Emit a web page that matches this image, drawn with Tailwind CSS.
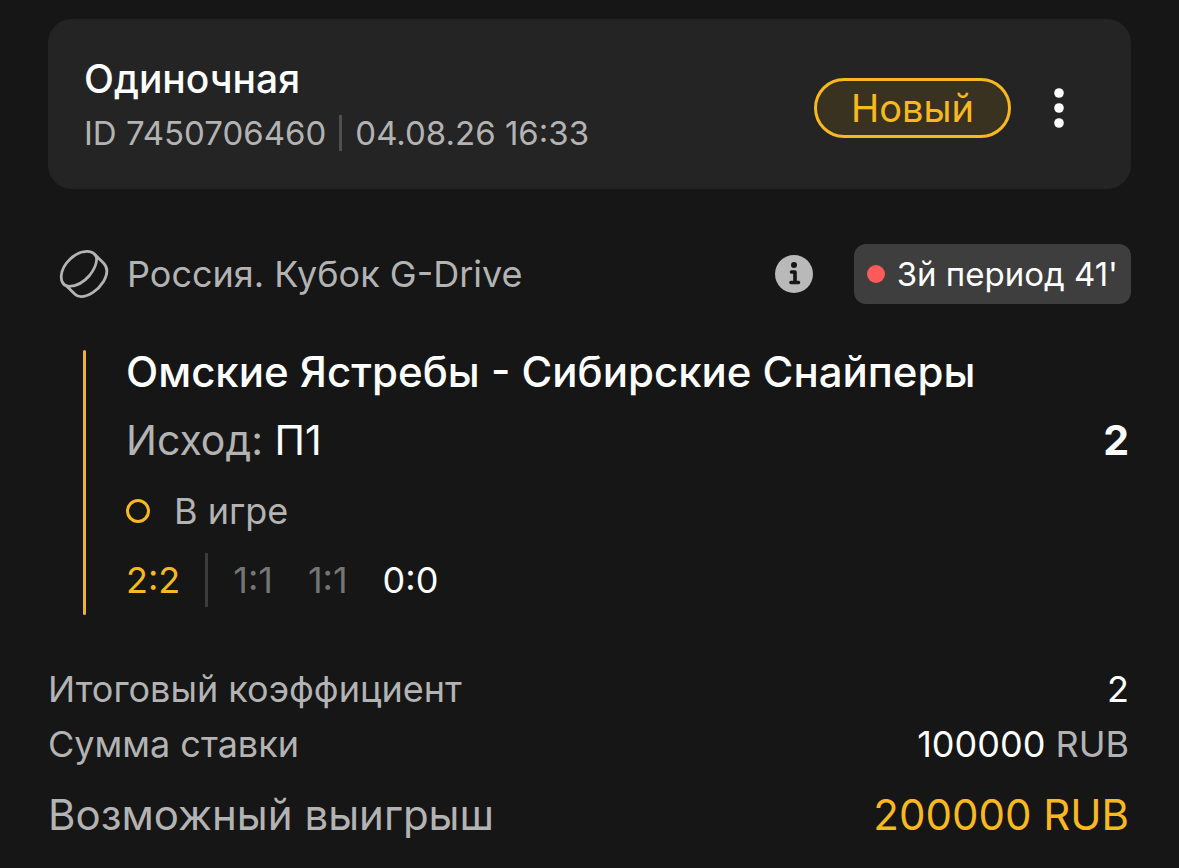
<!DOCTYPE html>
<html lang="ru">
<head>
<meta charset="utf-8">
<meta name="viewport" content="width=device-width, initial-scale=1">
<title>Одиночная ставка</title>
<script src="https://cdn.jsdelivr.net/npm/@tailwindcss/browser@4"></script>
</head>
<body class="bg-[#161616] font-['Inter',sans-serif] text-white">
<main class="flex min-h-screen flex-col px-12 pt-[19px] pb-6">
  <header class="flex items-center justify-between rounded-3xl bg-[#242424] pt-9 pr-[60px] pb-7 pl-9">
    <div class="pb-1">
      <h1 class="text-[39px] leading-[48px] font-medium">Одиночная</h1>
      <div class="mt-[6px] flex items-center gap-[13px] text-[33px] leading-[48px] text-[#b3b3b3]">
        <span>ID 7450706460</span>
        <span class="h-9 w-[3px] bg-[#4f4f4f]"></span>
        <time datetime="2026-08-04T16:33">04.08.26 16:33</time>
      </div>
    </div>
    <div class="flex items-center gap-9">
      <span class="flex h-[60px] items-center rounded-full border-3 border-[#f8b820] bg-[#3a3220] px-[34px] text-[38px] leading-[48px] text-[#f8b820]">Новый</span>
      <button type="button" aria-label="Меню" class="flex h-[60px] w-6 items-center justify-center">
        <svg class="h-10 w-3 fill-white" viewBox="0 0 12 40"><circle cx="6" cy="5" r="4.8"/><circle cx="6" cy="20" r="4.8"/><circle cx="6" cy="35" r="4.8"/></svg>
      </button>
    </div>
  </header>

  <section class="mt-[55px] flex items-center">
    <svg class="ml-2 h-14 w-14 fill-none stroke-[#b3b3b3]" viewBox="56 246 56 56" stroke-width="2.8" stroke-linejoin="round" stroke-linecap="round">
      <path d="M69 286.300C63.500 286.300 60.800 281.500 61.300 275.500C62.300 263.500 75.500 251.300 87 251.300C93 251.300 97 255 96.600 260C96.200 265 93.500 270.500 89.500 275.500C83.500 282.500 76 286.300 69 286.300Z"/>
      <path d="M94.800 254.500L103.700 263.200C107.800 267.500 107.500 274.500 103.500 281.500C98 290.500 88.500 296.600 81 296.600C78.500 296.600 76.500 295.700 75 294.200L66.300 285.800"/>
    </svg>
    <h2 class="ml-[15px] flex-1 text-[36px] leading-[48px] text-[#b3b3b3]">Россия. Кубок G-Drive</h2>
    <button type="button" aria-label="Информация" class="mr-[41px]">
      <svg class="h-[38px] w-[38px]" viewBox="0 0 38 38"><circle cx="19" cy="19" r="19" fill="#b9b9b9"/><circle cx="19" cy="10" r="3" fill="#161616"/><path d="M16.500 17h3.500v10.500M16 27.500h7.500" fill="none" stroke="#161616" stroke-width="3.600" stroke-linecap="round" stroke-linejoin="round"/></svg>
    </button>
    <div class="flex h-[60px] items-center gap-3 rounded-xl bg-[#3e3e3e] px-[13px] text-[33px] leading-[48px]">
      <span class="size-[18px] rounded-full bg-[#ff5a5a]"></span>
      <span>3й период 41'</span>
    </div>
  </section>

  <section class="mt-11 flex pr-0.5 pl-[35px]">
    <div class="mt-0.5 -mb-2 w-[3px] rounded-full bg-[#edb431]"></div>
    <div class="ml-10 flex-1">
      <h3 class="text-[42px] leading-[48px] font-medium">Омские Ястребы - Сибирские Снайперы</h3>
      <div class="mt-5 flex justify-between text-[41px] leading-[48px]">
        <p><span class="text-[#b3b3b3]">Исход:</span> П1</p>
        <strong class="font-bold">2</strong>
      </div>
      <div class="mt-[23px] flex items-center gap-6 text-[36px] leading-[48px] text-[#b3b3b3]">
        <span class="size-6 rounded-full border-3 border-[#f8b820]"></span>
        <span>В игре</span>
      </div>
      <div class="mt-[18px] flex items-center text-[36px] leading-[54px]">
        <span class="text-[#f8b820]">2:2</span>
        <span class="mx-[25px] h-[54px] w-[3px] bg-[#3c3c3c]"></span>
        <div class="flex gap-[35px]">
          <span class="text-[#757575]">1:1</span>
          <span class="text-[#757575]">1:1</span>
          <span>0:0</span>
        </div>
      </div>
    </div>
  </section>

  <dl class="mt-[58px] pr-0.5 text-[36px] leading-[48px] text-[#b3b3b3]">
    <div class="flex justify-between"><dt>Итоговый коэффициент</dt><dd class="text-white">2</dd></div>
    <div class="mt-[7px] flex justify-between"><dt>Сумма ставки</dt><dd><span class="text-white">100000</span> RUB</dd></div>
    <div class="mt-[23px] flex justify-between text-[42px]"><dt>Возможный выигрыш</dt><dd class="text-[#f8b820]">200000 RUB</dd></div>
  </dl>
</main>
</body>
</html>
